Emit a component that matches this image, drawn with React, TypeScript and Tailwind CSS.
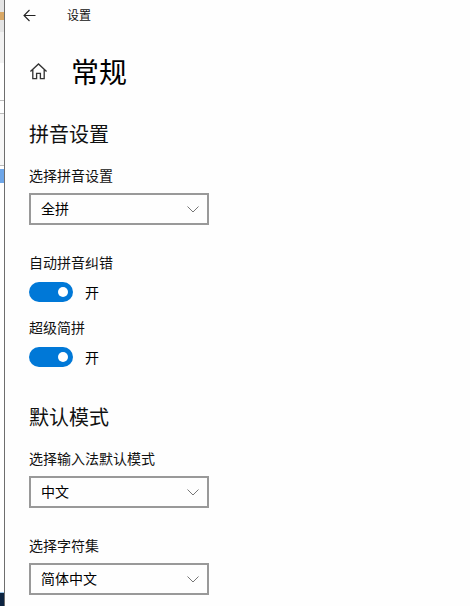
import React from "react";

const font = { fontFamily: '"Noto Sans CJK SC", sans-serif' };

function Select({ value }: { value: string }) {
  return (
    <div className="flex items-center justify-between w-[180px] h-[32px] border-2 border-[#999999] pl-[10px] pr-[8px] text-[14px] text-black">
      <span className="pb-[2px]">{value}</span>
      <svg width="12" height="7" viewBox="0 0 12 7" fill="none" stroke="#777" strokeWidth="1">
        <path d="M0.5 0.5 L6 6 L11.5 0.5" />
      </svg>
    </div>
  );
}

function Toggle() {
  return (
    <div className="flex items-center gap-3 h-[20px]">
      <div className="w-[44px] h-[20px] rounded-full bg-[#0078d7] flex items-center justify-end pr-[5px]">
        <div className="w-[10px] h-[10px] rounded-full bg-white" />
      </div>
      <span className="text-[14px] text-black">开</span>
    </div>
  );
}

function Label({ text }: { text: string }) {
  return <div className="pb-[2px] text-[14px] leading-[18px] text-[#111]">{text}</div>;
}

function Strip() {
  return (
    <div className="w-[5px] shrink-0 border-r border-[#6e6e6e] flex flex-col bg-white overflow-hidden">
      <div className="h-[32px] bg-[#e4e4e4] flex items-center">
        <div className="w-[4px] h-[8px] bg-[#d9a866]" />
      </div>
      <div className="h-[31px] bg-[#f2f2f2]" />
      <div className="h-[37px]" />
      <div className="h-[13px] border-t border-[#bbbbbb]" />
      <div className="h-[52px] border-t border-[#bbbbbb] bg-[#f7f7f7]" />
      <div className="h-[21px] border-t border-[#bbbbbb] flex items-center">
        <div className="w-[4px] h-[14px] bg-[#6ea6e8]" />
      </div>
      <div className="flex-1" />
      <div className="h-[1px] bg-[#9cc7e8]" />
      <div className="h-[13px] bg-[#0c2340]" />
    </div>
  );
}

export default function App() {
  return (
    <div style={font} className="w-[470px] h-[606px] overflow-hidden flex bg-white">
      <Strip />
      <div className="flex-1 bg-[#fefefe] pl-[24px]">
        <div className="flex items-center h-[30px]">
          <svg className="-ml-[6px]" width="13" height="13" viewBox="0 0 13 13" fill="none" stroke="#222" strokeWidth="1.1">
            <path d="M12.5 6.5 H1 M6.5 1 L1 6.5 L6.5 12" />
          </svg>
          <span className="ml-[31px] text-[12px] text-[#111]">设置</span>
        </div>
        <div className="flex items-center mt-[21px] h-[40px]">
          <svg width="19" height="19" viewBox="0 0 20 20" fill="none" stroke="#333" strokeWidth="1.4">
            <path d="M1.5 10 L10 2 L18.5 10 M4 8 V17.5 H8 V12 H12 V17.5 H16 V8" />
          </svg>
          <span className="ml-[23px] text-[28px] leading-none text-black">常规</span>
        </div>
        <div className="mt-[30px] text-[20px] leading-[26px] text-[#111]">拼音设置</div>
        <div className="mt-[19px]"><Label text="选择拼音设置" /></div>
        <div className="mt-[7px]"><Select value="全拼" /></div>
        <div className="mt-[28px]"><Label text="自动拼音纠错" /></div>
        <div className="mt-[9px]"><Toggle /></div>
        <div className="mt-[16px]"><Label text="超级简拼" /></div>
        <div className="mt-[9px]"><Toggle /></div>
        <div className="mt-[37px] text-[20px] leading-[26px] text-[#111]">默认模式</div>
        <div className="mt-[19px]"><Label text="选择输入法默认模式" /></div>
        <div className="mt-[7px]"><Select value="中文" /></div>
        <div className="mt-[28px]"><Label text="选择字符集" /></div>
        <div className="mt-[7px]"><Select value="简体中文" /></div>
      </div>
    </div>
  );
}
